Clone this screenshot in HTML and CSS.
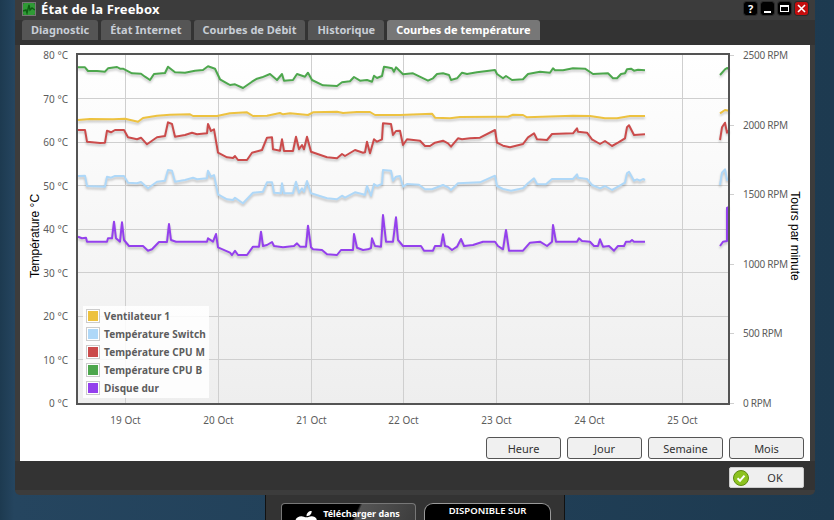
FILE: index.html
```html
<!DOCTYPE html>
<html lang="fr">
<head>
<meta charset="utf-8">
<title>État de la Freebox</title>
<link rel="stylesheet" href="styles.css">
</head>
<body>
<div class="store-panel">
  <div class="store store-apple">
    <svg class="apple" viewBox="0 0 24 24"><path d="M17 2c0 3-2 5-5 5 0-3 2-5 5-5zM12 8c2 0 3-1 5-1 2 0 4 1 5 3-3 2-3 6 1 8-1 3-3 6-5 6-2 0-3-1-5-1s-3 1-5 1c-3 0-7-6-7-11 0-4 3-6 6-6 2 0 3 1 5 1z"/></svg>
    <span class="store-text">Télécharger dans</span>
  </div>
  <div class="store store-play">
    <span class="store-text caps">DISPONIBLE SUR</span>
  </div>
</div>

<div class="window">
  <header class="titlebar">
    <svg class="app-icon" viewBox="0 0 12 12"><rect width="12" height="12" rx="1.5" fill="#2f9a35"/><path d="M0 8l3-1 1 3 2-8 1 5 2-2 3 2" fill="none" stroke="#0d5c12" stroke-width="1.4"/></svg>
    <h1 class="title">État de la Freebox</h1>
    <div class="controls">
      <span class="ctl ctl-help">?</span>
      <span class="ctl"><i class="glyph-min"></i></span>
      <span class="ctl"><i class="glyph-max"></i></span>
      <span class="ctl ctl-close">
        <svg viewBox="0 0 13 13"><path d="M3 3l7 7M10 3l-7 7" stroke="#fff" stroke-width="1.6" fill="none"/></svg>
      </span>
    </div>
  </header>

  <nav class="tabs">
    <span class="tab">Diagnostic</span>
    <span class="tab">État Internet</span>
    <span class="tab">Courbes de Débit</span>
    <span class="tab">Historique</span>
    <span class="tab tab-active">Courbes de température</span>
  </nav>

  <main class="content">
    <div class="chart">
      <svg class="chart-svg" width="790" height="392" viewBox="20 45 790 392">
        <defs>
          <linearGradient id="plotbg" x1="0" y1="0" x2="0" y2="1">
            <stop offset="0" stop-color="#ffffff"/>
            <stop offset="1" stop-color="#eeeeee"/>
          </linearGradient>
        </defs>
        <rect x="77" y="54" width="652" height="350" fill="url(#plotbg)"/>
        <path class="grid" d="M125.500 54V404M218.500 54V404M311.500 54V404M403.500 54V404M496.500 54V404M589.500 54V404M682.500 54V404M77 98.500H729M77 142.500H729M77 185.500H729M77 229.500H729M77 272.500H729M77 316.500H729M77 359.500H729"/>
        <path class="grid" d="M730 55.500h4M730 125.500h4M730 194.500h4M730 264.500h4M730 333.500h4M730 403.500h4"/>

        <g class="series">
          <polyline stroke="#edc240" points="78,120 90,119 113,119.300 125,118.700 138,121.700 143,118 157,115.700 170,114.700 190,114.300 193,116 217,116 230,113.300 247,112.300 253,116 267,115.700 280,113 283,114.300 290,113.300 308,115 313,112.300 337,111.700 343,113 357,112 370,112 375,115 400,115 432,113.700 435,117.700 450,118.300 460,117 500,116.700 508,116.700 513,114.700 523,115 527,117.300 573,115.700 590,116 605,118.300 617,118.300 630,116 645,116"/>
          <polyline stroke="#edc240" points="720,113.300 725,110 729,110.700"/>
          <polyline stroke="#afd8f8" points="78,176 85,175.700 87,186 105,186.700 107,176.700 111,177.700 115,176 124,176 128,182.700 137,183.300 141,182 148,188.300 157,181.700 165,180.700 168,170 172,170.700 175,181.700 185,180 193,177.700 197,179.300 207,178.300 208,170.700 211,176.700 214,175 218,194.300 227,199.300 233,200 235,197.700 243,203.300 253,192.700 263,191.700 267,182.300 272,182.300 274,192.700 281,193.300 282,183.300 284,193.300 293,193.300 296,181.700 299,192.700 302,188.300 304,191.700 307,181 311,193.300 327,198.300 337,199.300 342,195.700 345,197.700 355,192.300 363,194.300 365,195 367,186 371,195.700 374,184 377,186 382,184 383,170 391,170.700 393,180.700 396,176.700 400,176 403,186.700 407,184 419,184.700 425,189.300 432,189.300 443,185 448,187.300 451,190 458,183.300 480,182.300 495,175.700 497,186 503,189 511,190.700 523,188.300 528,183.300 534,178.300 537,184 546,184.300 552,179 573,179 577,174.300 578,177.700 587,179 592,185 600,188.300 605,186 612,190 618,186.700 625,182.700 627,173.300 629,171.700 634,180.700 637,179.300 640,180.700 643,179 645,180"/>
          <polyline stroke="#afd8f8" points="720,185 722,172.700 725,169.300 727,180 729,178"/>
          <polyline stroke="#cb4b4b" points="78,130 85,130 87,141.700 100,143 105,142.700 107,130.700 111,132.300 115,130 124,130 128,137.300 137,139.300 141,137.700 147,144.300 157,137.300 165,136 168,122.300 172,124 175,136.700 185,135 192,132.700 197,134.300 207,133.300 208,124 211,131 214,129.300 218,152.700 227,157.300 233,158 235,156 238,160 247,160 252,152.700 262,150 267,137.700 272,137.300 273,149.300 280,150.700 282,139.300 284,151 293,151 296,136.700 299,149.300 302,145 304,149.300 307,136.700 311,151.700 327,157.300 337,158.300 342,154 345,156 355,150 363,152.700 365,152.300 367,141.700 370,153.300 374,139.300 377,141.700 382,139.300 383,123.300 391,124 393,135 396,131 400,130.700 403,145 407,139.300 420,140.700 425,146 430,146 435,142.700 443,140.700 448,143.300 451,146.700 458,138.300 462,139.300 470,138.300 480,137.700 495,130 497,142.700 503,145.700 510,147.300 523,144 528,137.300 534,133.300 537,139.300 547,140 552,134 573,133.300 577,128.300 578,131.700 587,132.700 592,139.300 600,144 605,141 612,146 618,142.700 625,138.300 627,127.300 629,125.300 634,135 645,134.300"/>
          <polyline stroke="#cb4b4b" points="720,140 722,127.300 725,122.700 727,132.700 729,130"/>
          <polyline stroke="#4da74d" points="78,67.300 85,67.300 88,71 97,71 105,71.700 108,68.300 117,67 120,68.700 123,68.700 132,73.300 141,73.700 145,76.700 150,80 154,74 165,73 168,66.700 175,72.300 185,72.700 195,70.700 203,70 208,66.300 215,68.700 220,79.300 227,83.300 230,85 235,84.300 243,88 252,81.700 257,78.700 262,77.300 270,74 277,80 282,74 284,80.700 293,80 297,74 305,76.700 308,72.700 312,80 323,85.300 337,86 342,82.300 350,81.300 354,77 360,80.700 367,80 372,81.700 374,75.700 377,78 382,76 384,66.700 387,67.300 392,68.300 394,71.700 396,67.300 403,74.300 413,73.300 428,80.700 433,78.300 437,74 443,73.300 449,75 451,80 457,78.300 462,72.700 467,74 477,72.300 495,70 497,74 503,78.300 506,76 512,80 523,79.300 528,74 540,71.700 550,72.700 553,68.300 555,70.300 563,70.300 573,68.300 585,68.700 593,74 608,73.300 613,78.300 617,78.300 621,74 625,73.300 627,69.300 631,68.700 634,70.700 638,69.700 645,70.300"/>
          <polyline stroke="#4da74d" points="720,75 725,69.300 727,68 729,69"/>
          <polyline stroke="#9440ed" points="78,236.700 82,238.300 86,237.700 87,241.700 107,241.700 108,238.300 112,238.300 114,221.700 116,238.300 120,241.700 122,222.300 124,240 129,246 143,246 148,250.700 152,249.300 159,242 167,242 169,224 171,240 176,241.700 207,241.700 208,238.300 213,241.700 216,234 218,247.300 230,252.700 232,255 235,250.700 238,255 247,255 253,246.700 259,246.700 261,231.700 263,246 267,245 272,242 274,246 283,247.300 294,246 297,243.300 300,246.700 306,246.700 308,225.700 311,247.300 313,249.300 322,250 327,254.300 337,255 341,250 353,250 354,234 357,247.700 363,250 368,249.300 371,248 372,238.300 375,246 381,246.700 383,215 386,241.700 393,241.700 396,217.300 398,240 403,246 421,246 424,250.700 433,250.700 435,246 441,246 443,234.300 445,246 448,246.700 452,250 457,246.700 461,239 464,246 473,245 483,241.700 495,241.700 498,246 503,249.300 506,230 509,250.700 523,250.700 530,242.700 540,241.700 547,246 552,241.700 553,225 556,241.700 577,241.700 579,238.300 582,241 590,241.700 594,246 598,246 600,239.300 603,246.700 609,246 614,250.700 618,246 624,246 626,241.700 630,241.700 632,240 634,241.700 645,241.700"/>
          <polyline stroke="#9440ed" points="720,246 723,241.700 727,241 727,208 729,207"/>
        </g>

        <rect class="frame" x="77" y="54" width="652" height="350"/>

        <g class="tick tick-left">
          <text x="68" y="59">80 °C</text>
          <text x="68" y="103">70 °C</text>
          <text x="68" y="146">60 °C</text>
          <text x="68" y="190">50 °C</text>
          <text x="68" y="233">40 °C</text>
          <text x="68" y="277">30 °C</text>
          <text x="68" y="320">20 °C</text>
          <text x="68" y="364">10 °C</text>
          <text x="68" y="407">0 °C</text>
        </g>
        <g class="tick tick-right">
          <text x="743" y="59">2500 RPM</text>
          <text x="743" y="129">2000 RPM</text>
          <text x="743" y="198">1500 RPM</text>
          <text x="743" y="268">1000 RPM</text>
          <text x="743" y="337">500 RPM</text>
          <text x="743" y="407">0 RPM</text>
        </g>
        <g class="tick tick-x">
          <text x="125.500" y="424">19 Oct</text>
          <text x="218.500" y="424">20 Oct</text>
          <text x="311.500" y="424">21 Oct</text>
          <text x="403.500" y="424">22 Oct</text>
          <text x="496.500" y="424">23 Oct</text>
          <text x="589.500" y="424">24 Oct</text>
          <text x="682.500" y="424">25 Oct</text>
        </g>
        <text class="axis-label" transform="translate(39 236) rotate(-90)">Température °C</text>
        <text class="axis-label" transform="translate(791 236) rotate(90)">Tours par minute</text>
      </svg>

      <ul class="legend">
        <li class="legend-item"><span class="swatch"><i class="c-yellow"></i></span>Ventilateur 1</li>
        <li class="legend-item"><span class="swatch"><i class="c-blue"></i></span>Température Switch</li>
        <li class="legend-item"><span class="swatch"><i class="c-red"></i></span>Température CPU M</li>
        <li class="legend-item"><span class="swatch"><i class="c-green"></i></span>Température CPU B</li>
        <li class="legend-item"><span class="swatch"><i class="c-purple"></i></span>Disque dur</li>
      </ul>
    </div>

    <div class="ranges">
      <button class="range" type="button">Heure</button>
      <button class="range" type="button">Jour</button>
      <button class="range" type="button">Semaine</button>
      <button class="range" type="button">Mois</button>
    </div>
  </main>

  <footer class="footer">
    <button class="ok" type="button">
      <svg class="ok-icon" viewBox="0 0 16 16"><circle cx="8" cy="8" r="7.500" fill="#8cc21f" stroke="#5c8a10"/><path d="M4.500 8.300l2.500 2.400 4.500-5" fill="none" stroke="#fff" stroke-width="2"/></svg>
      <span class="ok-text">OK</span>
    </button>
  </footer>
</div>
</body>
</html>
```

FILE: styles.css
```css
* { box-sizing: border-box; }

html, body { height: 100%; }

body {
  margin: 0;
  overflow: hidden;
  position: relative;
  background: linear-gradient(90deg, #1d3a50 0, #25455f 14px, #1d3a50 100%);
  font-family: "Noto Sans", sans-serif;
}

.store-panel {
  position: absolute;
  left: 265px;
  top: 480px;
  width: 300px;
  height: 40px;
  padding: 23px 0 0 15px;
  display: flex;
  gap: 8px;
  background: #333;
  border-left: 1px solid #111;
  border-right: 1px solid #111;
}

.store {
  height: 30px;
  position: relative;
  background: #000;
  border: 1px solid #9a9a9a;
  border-bottom: 0;
  border-radius: 6px 6px 0 0;
  color: #fff;
  text-align: center;
  overflow: hidden;
}

.store-apple {
  width: 135px;
  padding-left: 26px;
  border-color: #777;
  background: linear-gradient(115deg, #000 0, #000 53%, #555 55%, #3a3a3a 100%);
  border-radius: 4px 4px 0 0;
}

.store-play {
  width: 127px;
  border-radius: 9px 9px 0 0;
}

.apple {
  position: absolute;
  left: 12px;
  top: 5px;
  width: 25px;
  height: 25px;
  fill: #fff;
}

.store-text {
  display: block;
  font-size: 9px;
  line-height: 13px;
  padding-top: 3px;
  font-weight: 700;
  white-space: nowrap;
}

.store-text.caps {
  padding-top: 0;
  font-size: 9.500px;
  font-weight: 600;
}

.window {
  position: absolute;
  left: 15px;
  top: 0;
  width: 800px;
  height: 495px;
  display: flex;
  flex-direction: column;
  background: #3c3c3c;
  border-radius: 0 0 5px 5px;
}

.titlebar {
  height: 20px;
  flex: none;
  display: flex;
  align-items: center;
  padding: 0 7px 3px 8px;
  position: relative;
}

.app-icon {
  width: 12px;
  height: 12px;
  flex: none;
  outline: 1px solid #777;
}

.title {
  margin: 0 0 0 6px;
  font-size: 13px;
  font-weight: 700;
  letter-spacing: .15px;
  color: #fff;
  flex: 1;
  line-height: 16px;
}

.controls {
  display: flex;
  gap: 4px;
}

.ctl {
  width: 13px;
  height: 13px;
  background: #000;
  border-radius: 2px;
  color: #fff;
  font-size: 11px;
  font-weight: 700;
  line-height: 13px;
  text-align: center;
  display: flex;
  align-items: center;
  justify-content: center;
  outline: 1px solid #2a2a2a;
}

.ctl-close { background: #c40d0d; }
.ctl-close svg { width: 13px; height: 13px; display: block; }

.glyph-min {
  display: block;
  width: 7px;
  height: 2px;
  background: #fff;
  margin-top: 6px;
}

.glyph-max {
  display: block;
  width: 9px;
  height: 7px;
  border: 1px solid #fff;
  border-top-width: 2px;
}

.tabs {
  height: 25px;
  flex: none;
  display: flex;
  gap: 3px;
  padding-left: 7px;
  background: #333;
}

.tab {
  height: 20px;
  padding: 0 9px;
  background: #555;
  color: #c8ced6;
  font-size: 11px;
  font-weight: 700;
  line-height: 19px;
  border-radius: 3px 3px 0 0;
  white-space: nowrap;
}

.tab-active {
  background: #777;
  color: #fff;
}

.content {
  margin: 0 5px;
  height: 416px;
  flex: none;
  background: #fff;
  display: flex;
  flex-direction: column;
}

.chart {
  height: 392px;
  flex: none;
  position: relative;
}

.chart-svg { display: block; }

.grid {
  fill: none;
  stroke: #cfcfcf;
  stroke-width: 1;
}

.frame {
  fill: none;
  stroke: #545454;
  stroke-width: 2;
}

.series polyline {
  fill: none;
  stroke-width: 2;
  stroke-linejoin: round;
}

.series { filter: drop-shadow(0 2px 1px rgba(0, 0, 0, .22)); }

.tick text {
  font-size: 10px;
  fill: #5c5c5c;
}

.tick-left text { text-anchor: end; }
.tick-right text { letter-spacing: -.25px; }
.tick-x text { text-anchor: middle; }

.axis-label {
  font-family: "Liberation Sans", sans-serif;
  font-size: 12px;
  fill: #000;
  text-anchor: middle;
}

.legend {
  position: absolute;
  left: 63px;
  top: 261px;
  width: 126px;
  height: 92px;
  margin: 0;
  padding: 1px 0 0 3px;
  list-style: none;
  background: rgba(255, 255, 255, .85);
}

.legend-item {
  height: 18px;
  display: flex;
  align-items: center;
  gap: 4px;
  font-size: 10px;
  font-weight: 700;
  letter-spacing: .1px;
  color: #5c5c5c;
  white-space: nowrap;
}

.swatch {
  width: 14px;
  height: 14px;
  flex: none;
  padding: 1px;
  border: 1px solid #ccc;
  background: #fff;
}

.swatch i { display: block; width: 100%; height: 100%; }
.c-yellow { background: #edc240; }
.c-blue { background: #afd8f8; }
.c-red { background: #cb4b4b; }
.c-green { background: #4da74d; }
.c-purple { background: #9440ed; }

.ranges {
  display: flex;
  justify-content: flex-end;
  gap: 6px;
  padding-right: 6px;
}

.range {
  width: 75px;
  height: 22px;
  padding: 0;
  background: #f0f0f0;
  border: 1px solid #555;
  border-radius: 3px;
  color: #333;
  font: 11px "Noto Sans", sans-serif;
}

.footer {
  height: 29px;
  flex: none;
  background: #333;
  display: flex;
  justify-content: flex-end;
  padding: 6px 11px 0 0;
}

.ok {
  width: 75px;
  height: 21px;
  padding: 0 0 0 3px;
  background: #efefef;
  border: 1px solid #ccc;
  border-radius: 2px;
  display: flex;
  align-items: center;
  font: 11px "Noto Sans", sans-serif;
  color: #333;
}

.ok-icon { width: 16px; height: 16px; flex: none; }
.ok-text { flex: 1; text-align: center; padding-right: 2px; }
```
